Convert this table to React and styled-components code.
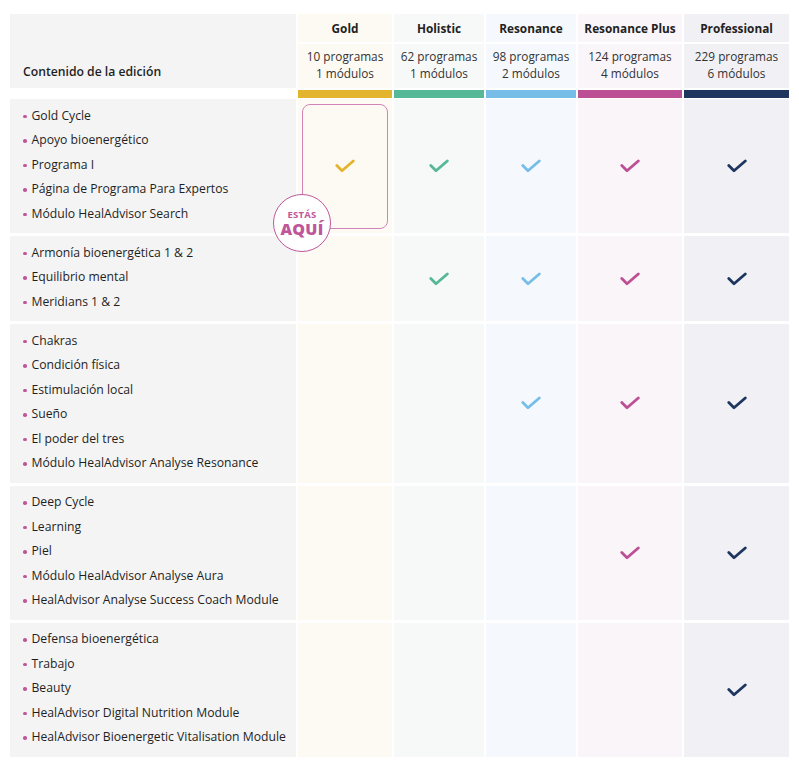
import styled, { createGlobalStyle } from "styled-components";

const GlobalStyle = createGlobalStyle`
    body {
        margin: 0;
        background: #ffffff;
        font-family: "Open Sans", "Noto Sans", sans-serif;
        color: #222222;
    }
`;

const COLS = "286px 94px 90px 90px 104px 105px";

const editions = [
    { name: "Gold", programs: 10, modules: 1, color: "#e3b52e", tint: "#fdfaf3" },
    { name: "Holistic", programs: 62, modules: 1, color: "#55b896", tint: "#f7f9f9" },
    { name: "Resonance", programs: 98, modules: 2, color: "#76bde7", tint: "#f5f9fd" },
    { name: "Resonance Plus", programs: 124, modules: 4, color: "#bd4f95", tint: "#faf5f9" },
    { name: "Professional", programs: 229, modules: 6, color: "#1d355f", tint: "#f1f1f5" },
];

// from: index of the first edition that includes the group
const groups = [
    { from: 0, items: ["Gold Cycle", "Apoyo bioenergético", "Programa I", "Página de Programa Para Expertos", "Módulo HealAdvisor Search"] },
    { from: 1, items: ["Armonía bioenergética 1 & 2", "Equilibrio mental", "Meridians 1 & 2"] },
    { from: 2, items: ["Chakras", "Condición física", "Estimulación local", "Sueño", "El poder del tres", "Módulo HealAdvisor Analyse Resonance"] },
    { from: 3, items: ["Deep Cycle", "Learning", "Piel", "Módulo HealAdvisor Analyse Aura", "HealAdvisor Analyse Success Coach Module"] },
    { from: 4, items: ["Defensa bioenergética", "Trabajo", "Beauty", "HealAdvisor Digital Nutrition Module", "HealAdvisor Bioenergetic Vitalisation Module"] },
];

const Page = styled.div`
    padding: 14px 10px 9px 10px;
`;

const Head = styled.div`
    display: grid;
    grid-template-columns: ${COLS};
    grid-template-rows: 28px 44px 8px;
    column-gap: 2px;
    row-gap: 2px;
`;

const HeadLabel = styled.div`
    grid-row: 1 / span 2;
    background: #f4f4f4;
    display: flex;
    align-items: flex-end;
    padding: 0 0 8px 13px;
    font-size: 12.2px;
    font-weight: 600;
    color: #1f1f1f;
`;

const NameCell = styled.div`
    background: ${(p) => p.$tint};
    display: flex;
    align-items: center;
    justify-content: center;
    font-size: 11.8px;
    font-weight: 700;
    color: #222;
    white-space: nowrap;
`;

const CountCell = styled.div`
    background: ${(p) => p.$tint};
    display: flex;
    flex-direction: column;
    align-items: center;
    justify-content: center;
    font-size: 11.8px;
    line-height: 17px;
    color: #333;
    white-space: nowrap;
    padding-bottom: 2px;
`;

const Bar = styled.div`
    background: ${(p) => p.$color};
`;

const Body = styled.div`
    display: grid;
    grid-template-columns: ${COLS};
    column-gap: 2px;
    row-gap: 3px;
    margin-top: 1px;
`;

const GroupLabel = styled.ul`
    margin: 0;
    list-style: none;
    background: #f4f4f4;
    padding: 4.5px 0 7px 13px;
`;

const Item = styled.li`
    display: flex;
    align-items: center;
    height: 24.5px;
    font-size: 12.2px;
    line-height: 24.5px;
    color: #1f1f1f;
    white-space: nowrap;

    &::before {
        content: "";
        flex: none;
        width: 3.5px;
        height: 3.5px;
        border-radius: 50%;
        background: #c0569a;
        margin: 1px 5px 0 0;
    }
`;

const GroupCell = styled.div`
    position: relative;
    background: ${(p) => p.$tint};
    display: flex;
    align-items: center;
    justify-content: center;
`;

const Current = styled.div`
    position: absolute;
    inset: 5px 4px 4px 4px;
    border: 1.5px solid #d384b6;
    border-radius: 8px;
`;

const Badge = styled.div`
    position: absolute;
    left: -25px;
    top: 95px;
    width: 58px;
    height: 58px;
    box-sizing: border-box;
    border-radius: 50%;
    border: 1.5px solid #c0579a;
    background: #ffffff;
    z-index: 2;
    display: flex;
    flex-direction: column;
    align-items: center;
    justify-content: center;
    color: #c0569a;
    font-weight: 700;
    padding-top: 1px;

    span {
        font-size: 9.5px;
        line-height: 10px;
        letter-spacing: 0.2px;
    }

    strong {
        font-size: 16px;
        line-height: 18px;
        letter-spacing: 0.3px;
    }
`;

const Check = ({ color }) => (
    <svg width="20" height="14" viewBox="0 0 20 14" fill="none">
        <path d="M1.8 6.6 L7 11.8 L18.3 2" stroke={color} strokeWidth="2.8" strokeLinecap="round" strokeLinejoin="round" />
    </svg>
);

const App = () => {
    return (
        <Page>
            <GlobalStyle />
            <Head>
                <HeadLabel>Contenido de la edición</HeadLabel>
                {editions.map((e) => (
                    <NameCell key={e.name} $tint={e.tint}>{e.name}</NameCell>
                ))}
                {editions.map((e) => (
                    <CountCell key={e.name} $tint={e.tint}>
                        <div>{e.programs} programas</div>
                        <div>{e.modules} módulos</div>
                    </CountCell>
                ))}
                <div />
                {editions.map((e) => (
                    <Bar key={e.name} $color={e.color} />
                ))}
            </Head>

            <Body>
                {groups.map((g, gi) => (
                    <>
                        <GroupLabel key={"l" + gi}>
                            {g.items.map((it) => (
                                <Item key={it}>{it}</Item>
                            ))}
                        </GroupLabel>
                        {editions.map((e, ei) => (
                            <GroupCell key={gi + e.name} $tint={e.tint}>
                                {gi === 0 && ei === 0 && (
                                    <>
                                        <Current />
                                        <Badge>
                                            <span>ESTÁS</span>
                                            <strong>AQUÍ</strong>
                                        </Badge>
                                    </>
                                )}
                                {ei >= g.from && <Check color={e.color} />}
                            </GroupCell>
                        ))}
                    </>
                ))}
            </Body>
        </Page>
    );
};

export default App;
